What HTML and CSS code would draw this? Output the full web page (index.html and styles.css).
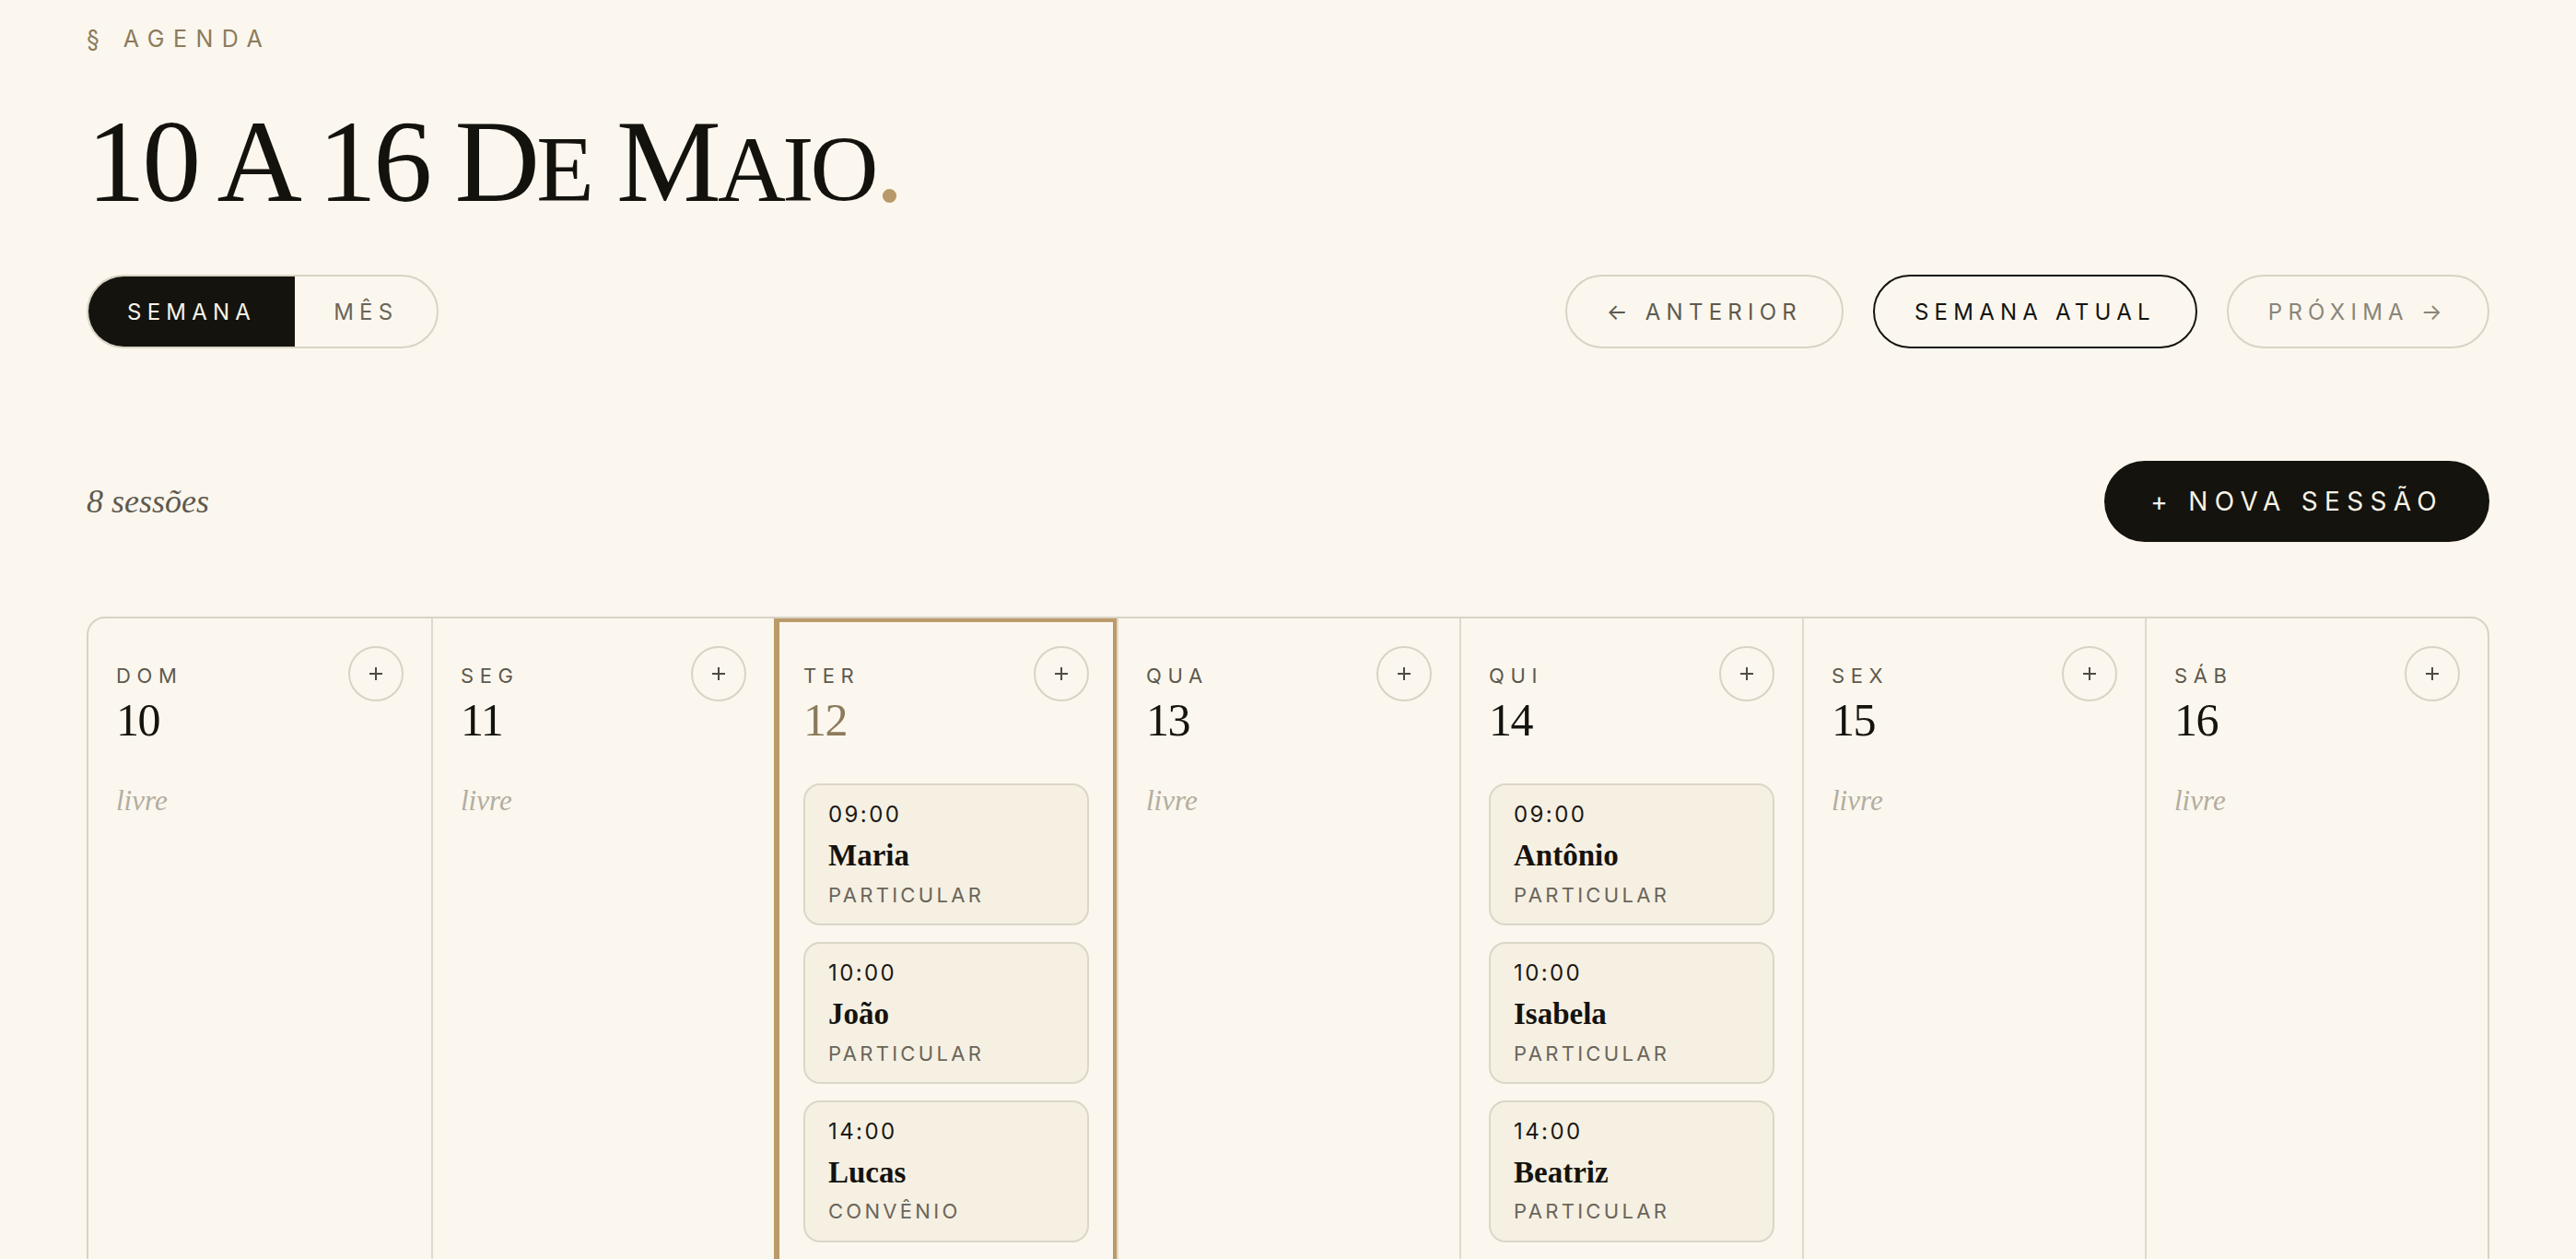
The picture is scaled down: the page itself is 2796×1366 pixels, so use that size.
FILE: index.html
```html
<!doctype html>
<html lang="pt-BR">
<head>
<meta charset="utf-8">
<title>Agenda</title>
<link rel="stylesheet" href="styles.css">
</head>
<body>
<main class="page">

<header class="top">
	<p class="eyebrow">§ Agenda</p>
	<h1 class="title">10 A 16 D<span class="sc">e</span> M<span class="sc">aio</span><span class="dot">.</span></h1>

	<div class="controls">
		<div class="toggle">
			<button class="seg active">Semana</button>
			<button class="seg">Mês</button>
		</div>
		<nav class="week-nav">
			<button class="pill">← Anterior</button>
			<button class="pill current">Semana atual</button>
			<button class="pill muted">Próxima →</button>
		</nav>
	</div>
</header>

<div class="summary">
	<span class="count">8 sessões</span>
	<button class="new">+ Nova sessão</button>
</div>

<section class="week">
	<div class="day">
		<div class="day-head">
			<div class="day-info"><div class="dow">Dom</div><div class="date">10</div></div>
			<button class="add"><svg viewBox="0 0 14 14"><path d="M7 0v14M0 7h14"/></svg></button>
		</div>
		<div class="day-body"><span class="free">livre</span></div>
	</div>

	<div class="day">
		<div class="day-head">
			<div class="day-info"><div class="dow">Seg</div><div class="date">11</div></div>
			<button class="add"><svg viewBox="0 0 14 14"><path d="M7 0v14M0 7h14"/></svg></button>
		</div>
		<div class="day-body"><span class="free">livre</span></div>
	</div>

	<div class="day today">
		<div class="day-head">
			<div class="day-info"><div class="dow">Ter</div><div class="date">12</div></div>
			<button class="add"><svg viewBox="0 0 14 14"><path d="M7 0v14M0 7h14"/></svg></button>
		</div>
		<div class="day-body">
			<div class="session">
				<div class="time">09:00</div>
				<div class="name">Maria</div>
				<div class="kind">Particular</div>
			</div>
			<div class="session">
				<div class="time">10:00</div>
				<div class="name">João</div>
				<div class="kind">Particular</div>
			</div>
			<div class="session">
				<div class="time">14:00</div>
				<div class="name">Lucas</div>
				<div class="kind">Convênio</div>
			</div>
			<div class="session">
				<div class="time">16:00</div>
				<div class="name">Ana</div>
				<div class="kind">Particular</div>
			</div>
		</div>
	</div>

	<div class="day">
		<div class="day-head">
			<div class="day-info"><div class="dow">Qua</div><div class="date">13</div></div>
			<button class="add"><svg viewBox="0 0 14 14"><path d="M7 0v14M0 7h14"/></svg></button>
		</div>
		<div class="day-body"><span class="free">livre</span></div>
	</div>

	<div class="day">
		<div class="day-head">
			<div class="day-info"><div class="dow">Qui</div><div class="date">14</div></div>
			<button class="add"><svg viewBox="0 0 14 14"><path d="M7 0v14M0 7h14"/></svg></button>
		</div>
		<div class="day-body">
			<div class="session">
				<div class="time">09:00</div>
				<div class="name">Antônio</div>
				<div class="kind">Particular</div>
			</div>
			<div class="session">
				<div class="time">10:00</div>
				<div class="name">Isabela</div>
				<div class="kind">Particular</div>
			</div>
			<div class="session">
				<div class="time">14:00</div>
				<div class="name">Beatriz</div>
				<div class="kind">Particular</div>
			</div>
			<div class="session">
				<div class="time">16:00</div>
				<div class="name">Pedro</div>
				<div class="kind">Convênio</div>
			</div>
		</div>
	</div>

	<div class="day">
		<div class="day-head">
			<div class="day-info"><div class="dow">Sex</div><div class="date">15</div></div>
			<button class="add"><svg viewBox="0 0 14 14"><path d="M7 0v14M0 7h14"/></svg></button>
		</div>
		<div class="day-body"><span class="free">livre</span></div>
	</div>

	<div class="day">
		<div class="day-head">
			<div class="day-info"><div class="dow">Sáb</div><div class="date">16</div></div>
			<button class="add"><svg viewBox="0 0 14 14"><path d="M7 0v14M0 7h14"/></svg></button>
		</div>
		<div class="day-body"><span class="free">livre</span></div>
	</div>
</section>

</main>
</body>
</html>
```

FILE: styles.css
```css
body {
	margin: 0;
	background: #fbf7ee;
	color: #14130e;
	font-family: Inter, "Noto Sans", sans-serif;
}
button {
	font-family: inherit;
	cursor: pointer;
}
.page {
	padding: 27px 94px 80px;
}

/* header */
.eyebrow {
	margin: 0;
	font-size: 25px;
	line-height: 1.2;
	letter-spacing: .38em;
	text-transform: uppercase;
	color: #8c7b5c;
}
.title {
	margin: 54px 0 0;
	font-family: "Liberation Serif", serif;
	font-weight: 400;
	font-size: 128px;
	line-height: 1;
	letter-spacing: -.03em;
	color: #14120d;
}
.title .sc {
	font-size: .8em;
	text-transform: uppercase;
}
.title .dot {
	color: #b89a6a;
}
.controls {
	display: flex;
	justify-content: space-between;
	margin-top: 59px;
}
.toggle {
	display: flex;
	height: 80px;
	box-sizing: border-box;
	border: 2px solid #d9d3c4;
	border-radius: 999px;
	overflow: hidden;
}
.seg {
	padding: 0 42px;
	border: 0;
	background: none;
	font-size: 24px;
	letter-spacing: .26em;
	text-transform: uppercase;
	color: #6b665a;
}
.seg.active {
	background: #14130e;
	color: #f8f3e7;
}
.week-nav {
	display: flex;
	gap: 32px;
}
.pill {
	height: 80px;
	padding: 0 43px;
	border: 2px solid #d9d3c4;
	border-radius: 999px;
	background: none;
	font-size: 24px;
	letter-spacing: .26em;
	text-transform: uppercase;
	color: #5f5a4f;
}
.pill.current {
	border-color: #14130e;
	color: #14130e;
}
.pill.muted {
	color: #8a8579;
}

/* summary */
.summary {
	display: flex;
	justify-content: space-between;
	align-items: center;
	margin-top: 122px;
}
.count {
	font-family: "Liberation Serif", serif;
	font-style: italic;
	font-size: 36px;
	color: #5f5a4f;
}
.new {
	height: 88px;
	padding: 0 50px;
	border: 0;
	border-radius: 999px;
	background: #14130e;
	color: #f8f3e7;
	font-size: 28px;
	letter-spacing: .26em;
	text-transform: uppercase;
}

/* week grid */
.week {
	display: grid;
	grid-template-columns: repeat(7, 1fr);
	margin-top: 81px;
	border: 2px solid #d9d3c4;
	border-radius: 20px;
}
.day {
	min-height: 900px;
	padding: 30px 30px 40px;
	border-left: 2px solid #e0dacd;
}
.day:first-child {
	border-left: 0;
}
.day.today {
	border-left-color: #bb9b6b;
	box-shadow: inset 0 0 0 4px #bb9b6b;
}
.day-head {
	display: flex;
	justify-content: space-between;
	align-items: flex-start;
}
.day-info {
	padding-top: 19px;
}
.dow {
	font-size: 22px;
	line-height: 1.2;
	letter-spacing: .3em;
	text-transform: uppercase;
	color: #5d594e;
}
.date {
	margin-top: 10px;
	font-family: "Liberation Serif", serif;
	font-size: 50px;
	line-height: 1;
	letter-spacing: -.03em;
	color: #14130e;
}
.today .date {
	color: #8c7b5b;
}
.add {
	display: grid;
	place-items: center;
	width: 60px;
	height: 60px;
	padding: 0;
	border: 2px solid #d9d3c4;
	border-radius: 50%;
	background: none;
}
.add svg {
	width: 14px;
	height: 14px;
	stroke: #4f4b42;
	stroke-width: 2;
}
.day-body {
	display: flex;
	flex-direction: column;
	gap: 18px;
	margin-top: 44px;
}
.free {
	font-family: "Liberation Serif", serif;
	font-style: italic;
	font-size: 31px;
	line-height: 1.2;
	color: #b2ada0;
}
.session {
	padding: 18px 25px;
	border: 2px solid #dcd6c7;
	border-radius: 18px;
	background: #f6f0e3;
}
.time {
	font-size: 24px;
	line-height: 1.2;
	letter-spacing: .1em;
	color: #1a1914;
}
.name {
	margin-top: 10px;
	font-family: "Liberation Serif", serif;
	font-weight: 700;
	font-size: 33px;
	line-height: 1.2;
	color: #14130e;
}
.kind {
	margin-top: 9px;
	font-size: 22px;
	line-height: 1.2;
	letter-spacing: .15em;
	text-transform: uppercase;
	color: #6a655a;
}
```
